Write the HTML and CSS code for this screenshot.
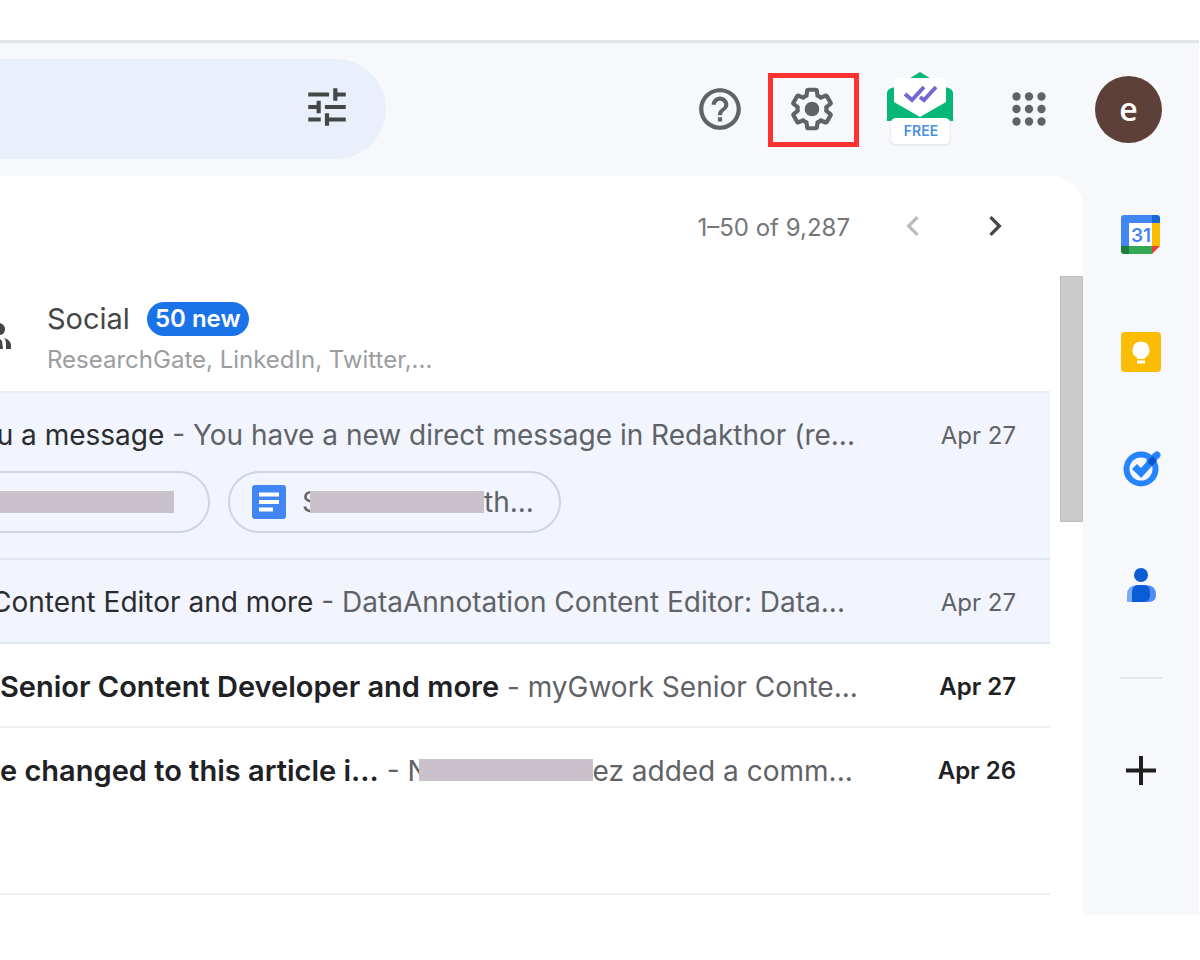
FILE: index.html
```html
<!DOCTYPE html>
<html lang="en">
<head>
<meta charset="utf-8">
<title>Inbox</title>
<link rel="stylesheet" href="styles.css">
</head>
<body>
<div class="app">
  <header class="topbar">
    <div class="search">
      <button class="icon-btn" aria-label="Show search options">
        <svg class="icon" viewBox="0 0 24 24" fill="#444746"><path d="M3 17v2h6v-2H3zM3 5v2h10V5H3zm10 16v-2h8v-2h-8v-2h-2v6h2zM7 9v2H3v2h4v2h2V9H7zm14 4v-2H11v2h10zm-6-4h2V7h4V5h-4V3h-2v6z"/></svg>
      </button>
    </div>
    <nav class="tools">
      <button class="icon-btn" aria-label="Support">
        <svg class="icon" viewBox="0 0 24 24" fill="#5f6368"><path d="M11 18h2v-2h-2v2zm1-16C6.480 2 2 6.480 2 12s4.480 10 10 10 10-4.480 10-10S17.520 2 12 2zm0 18c-4.410 0-8-3.590-8-8s3.590-8 8-8 8 3.590 8 8-3.590 8-8 8zm0-14c-2.210 0-4 1.790-4 4h2c0-1.100.9-2 2-2s2 .9 2 2c0 2-3 1.750-3 5h2c0-2.250 3-2.500 3-5 0-2.210-1.790-4-4-4z"/></svg>
      </button>
      <button class="icon-btn highlighted" aria-label="Settings">
        <svg class="icon" viewBox="0 0 24 24" fill="#5f6368"><path d="M13.850 22.250h-3.700c-.74 0-1.360-.54-1.450-1.270l-.27-1.890c-.27-.14-.53-.29-.79-.46l-1.800.72c-.7.26-1.470-.03-1.810-.65L2.200 15.530c-.35-.66-.2-1.440.36-1.880l1.530-1.190c-.01-.15-.02-.3-.02-.46 0-.15.01-.31.02-.46l-1.520-1.190c-.59-.45-.74-1.260-.37-1.880l1.850-3.190c.34-.62 1.110-.9 1.790-.63l1.810.73c.26-.17.52-.32.78-.46l.27-1.910c.09-.7.71-1.250 1.440-1.250h3.700c.74 0 1.360.54 1.450 1.270l.27 1.890c.27.14.53.29.79.46l1.800-.72c.71-.26 1.480.03 1.820.65l1.840 3.180c.36.66.2 1.440-.36 1.880l-1.520 1.190c.01.15.02.3.02.46s-.01.31-.02.46l1.520 1.190c.56.45.72 1.230.37 1.860l-1.860 3.220c-.34.62-1.110.9-1.800.63l-1.800-.72c-.26.17-.52.32-.78.46l-.27 1.910c-.1.680-.720 1.220-1.460 1.220zm-3.230-2h2.760l.37-2.550.53-.22c.44-.18.88-.44 1.340-.78l.45-.34 2.380.96 1.380-2.400-2.030-1.580.07-.56c.03-.26.06-.51.06-.78s-.03-.53-.06-.78l-.07-.56 2.030-1.580-1.390-2.400-2.390.96-.45-.35c-.42-.32-.87-.58-1.330-.77l-.52-.22-.37-2.550h-2.760l-.37 2.550-.53.21c-.44.19-.88.44-1.340.79l-.45.33-2.380-.95-1.390 2.390 2.030 1.580-.07.56a7 7 0 0 0-.06.790c0 .26.020.53.060.78l.07.56-2.030 1.580 1.380 2.400 2.390-.96.45.35c.43.33.86.58 1.330.77l.53.22.38 2.550z"/><circle cx="12" cy="12" r="3.500"/></svg>
      </button>
      <button class="tracker" aria-label="Mail tracker, free">
        <svg class="envelope" viewBox="0 0 66 74">
          <path d="M20 8 33 0l13 8v10H20z" fill="#06b877"/>
          <path d="M0 21c0-3 3-5 8-6h50c5 1 8 3 8 6v28H0z" fill="#06b877"/>
          <path d="M7 9q0-3 3-3h46q3 0 3 3v21L33 45 7 30z" fill="#fff"/>
          <path d="m18 22 7 6 12-13M33 25l4 3 12-13" fill="none" stroke="#7468d4" stroke-width="4"/>
          <rect x="3" y="47" width="61" height="27" rx="5" fill="#e9ebee"/>
          <rect x="4" y="46" width="59" height="26" rx="5" fill="#fff"/>
          <text class="free" x="34" y="64" text-anchor="middle">FREE</text>
        </svg>
      </button>
      <button class="icon-btn apps" aria-label="Google apps">
        <svg class="icon" viewBox="0 0 24 24" fill="#5f6368"><circle cx="6" cy="6" r="2"/><circle cx="12" cy="6" r="2"/><circle cx="18" cy="6" r="2"/><circle cx="6" cy="12" r="2"/><circle cx="12" cy="12" r="2"/><circle cx="18" cy="12" r="2"/><circle cx="6" cy="18" r="2"/><circle cx="12" cy="18" r="2"/><circle cx="18" cy="18" r="2"/></svg>
      </button>
      <button class="avatar" aria-label="Account">e</button>
    </nav>
  </header>

  <div class="content">
    <main class="panel">
      <div class="pager">
        <span class="range">1–50 of 9,287</span>
        <button class="icon-btn" aria-label="Newer" disabled>
          <svg class="chevron" viewBox="0 0 24 24" fill="#b9bbbd"><path d="M15.410 7.410 14 6l-6 6 6 6 1.410-1.410L10.830 12z"/></svg>
        </button>
        <button class="icon-btn" aria-label="Older">
          <svg class="chevron" viewBox="0 0 24 24" fill="#444746"><path d="M10 6 8.590 7.410 13.170 12l-4.580 4.590L10 18l6-6z"/></svg>
        </button>
      </div>
      <div class="scroller">
        <div class="list">
          <button class="tab">
            <svg class="people" viewBox="0 0 11 26" fill="#444746"><path d="M0 0c3 1 5 3 5 6s-2 6-5 6zM0 16l2 2 1 8H0zM4 15c4 1 7 4 7 7v4H6v-4c0-3 0-5-2-7z"/></svg>
            <span class="tab-text">
              <span class="tab-title">Social <span class="badge">50 new</span></span>
              <span class="tab-sub">ResearchGate, LinkedIn, Twitter,...</span>
            </span>
          </button>
          <article class="mail read tall">
            <div class="line"><p class="text"><span class="subject">ou a message</span> - You have a new direct message in Redakthor (re...</p><time>Apr 27</time></div>
            <div class="chips">
              <button class="chip chip-cut" aria-label="Attachment"><span class="redact redact-file"></span></button>
              <button class="chip">
                <svg class="doc" viewBox="0 0 34 34"><rect width="34" height="34" rx="3" fill="#4285f4"/><path d="M7 9.500h20M7 17h20M7 24.500h14" stroke="#fff" stroke-width="4"/></svg>
                <span class="chip-name">S<span class="redact redact-title"></span>th...</span>
              </button>
            </div>
          </article>
          <article class="mail read">
            <div class="line"><p class="text inset"><span class="subject">Content Editor and more</span> - DataAnnotation Content Editor: Data...</p><time>Apr 27</time></div>
          </article>
          <article class="mail unread">
            <div class="line"><p class="text"><span class="subject">Senior Content Developer and more</span> - myGwork Senior Conte...</p><time>Apr 27</time></div>
          </article>
          <article class="mail unread tall">
            <div class="line"><p class="text"><span class="subject">e changed to this article i...</span> - N<span class="redact redact-name"></span>ez added a comm...</p><time>Apr 26</time></div>
          </article>
        </div>
        <div class="track"><div class="thumb"></div></div>
      </div>
    </main>

    <aside class="side">
      <button class="icon-btn" aria-label="Calendar">
        <svg class="app-icon" viewBox="0 0 42 42"><path d="M1 4q0-3 3-3h28v8H9v23H1z" fill="#4285f4"/><path d="M32 1h5q3 0 3 3v5h-8z" fill="#1967d2"/><path d="M32 9h8v23h-8z" fill="#fbbc04"/><path d="M9 32h23v8H9z" fill="#34a853"/><path d="M1 32h8v8H4q-3 0-3-3z" fill="#188038"/><path d="M32 32h8l-8 8z" fill="#ea4335"/><path d="M9 9h23v23H9z" fill="#fff"/><text class="day" x="21" y="28" text-anchor="middle">31</text></svg>
      </button>
      <button class="icon-btn" aria-label="Keep">
        <svg class="app-icon" viewBox="0 0 42 42"><rect x="1" y="1" width="40" height="40" rx="4" fill="#fbbc04"/><path d="M21 10.500a8.500 8.500 0 0 0-4 16V28h8v-1.500a8.500 8.500 0 0 0-4-16zM17 29.500h8v3h-8z" fill="#fff"/></svg>
      </button>
      <button class="icon-btn" aria-label="Tasks">
        <svg class="app-icon" viewBox="0 0 42 42" fill="none"><circle cx="21" cy="21" r="14.500" stroke="#2684fc" stroke-width="6"/><path d="m14.500 18.500 6.500 6.500L32 13" stroke="#2684fc" stroke-width="7"/><path d="m30 13 7-6" stroke="#2684fc" stroke-width="7" stroke-linecap="round"/><path d="m29 11 4-3 4 5-5 5-4-3z" fill="#0657cf"/></svg>
      </button>
      <button class="icon-btn" aria-label="Contacts">
        <svg class="app-icon" viewBox="0 0 42 42"><circle cx="21" cy="10" r="7" fill="#0b5cd5"/><path d="M7 37v-7q0-10 10-10h9v17z" fill="#7baaf7"/><path d="M24 20h2q10 0 10 10v0q0 7-7 7h-5z" fill="#4c8df6"/><path d="M12 37V27q0-7 7-7h4q7 0 7 7v3q0 7-7 7z" fill="#0b5cd5"/></svg>
      </button>
      <hr class="divider">
      <button class="icon-btn" aria-label="Get add-ons">
        <svg class="app-icon" viewBox="0 0 42 42"><path d="M21 7v29M6 21.500h30" stroke="#1f1f1f" stroke-width="4"/></svg>
      </button>
    </aside>
  </div>
</div>
</body>
</html>
```
FILE: styles.css
```css
* { box-sizing: border-box; }

body {
  margin: 0;
  background: #fff;
  color: #5f6368;
  font-family: Inter, "Open Sans", sans-serif;
}

button {
  margin: 0;
  padding: 0;
  border: 0;
  background: none;
  color: inherit;
  font: inherit;
}

svg { display: block; }

.app {
  margin: 40px 1px 0 0;
  border-top: 3px solid #e2e5e5;
  background: #f6f8fc;
}

.topbar {
  display: flex;
  gap: 309px;
  padding: 16px 37px 17px 0;
}

.search {
  display: flex;
  flex: 1;
  align-items: center;
  justify-content: flex-end;
  height: 100px;
  padding: 0 34px 4px 0;
  border-radius: 0 50px 50px 0;
  background: #e9f0fb;
}

.tools {
  display: flex;
  align-items: center;
}

.icon { width: 50px; height: 50px; }

.highlighted {
  display: flex;
  align-items: center;
  justify-content: center;
  width: 91px;
  height: 74px;
  margin: 2px 28px 0 23px;
  padding: 0 4px 2px 0;
  border: 5px solid #ff3131;
}

.envelope { width: 66px; height: 74px; }

.free {
  fill: #4a90e2;
  font-size: 14px;
  font-weight: 600;
}

.apps { margin: 0 41px 0 51px; }

.avatar {
  width: 67px;
  height: 67px;
  border-radius: 50%;
  background: #5d4037;
  color: #fff;
  font-family: "Open Sans", sans-serif;
  font-size: 32px;
  font-weight: 600;
  line-height: 60px;
}

.content { display: flex; }

.panel {
  flex: 1;
  min-width: 0;
  padding-bottom: 20px;
  border-radius: 0 32px 0 0;
  background: #fff;
}

.pager {
  display: flex;
  align-items: center;
  justify-content: flex-end;
  height: 100px;
  padding-right: 68px;
}

.range {
  margin-right: 43px;
  padding-top: 2px;
  color: #747679;
  font-size: 24px;
}

.pager .icon-btn + .icon-btn { margin-left: 42px; }

.chevron { width: 40px; height: 40px; }

.scroller { display: flex; }

.list {
  flex: 1;
  min-width: 0;
}

.track {
  width: 23px;
  margin-left: 10px;
}

.thumb {
  height: 246px;
  border: 1px solid #bdbdbd;
  background: #cbcbcb;
}

.tab {
  display: flex;
  align-items: center;
  width: 100%;
  height: 117px;
  padding-top: 10px;
  border-bottom: 2px solid #eceff1;
  text-align: left;
}

.people {
  width: 11px;
  height: 26px;
  margin-bottom: 6px;
}

.tab-text {
  display: grid;
  gap: 8px;
  margin-left: 36px;
}

.tab-title {
  display: flex;
  align-items: center;
  gap: 17px;
  color: #444746;
  font-size: 29px;
  line-height: 34px;
}

.badge {
  padding: 0 8px;
  border-radius: 17px;
  background: #1a73e8;
  color: #fff;
  font-size: 24px;
  font-weight: 600;
}

.tab-sub {
  color: #9b9da0;
  font-size: 24px;
  line-height: 32px;
}

.mail {
  height: 84px;
  border-bottom: 2px solid #eef1f2;
}

.mail.tall { height: 167px; }

.read {
  border-color: #e1e7ef;
  background: #f2f5fd;
}

.line {
  display: flex;
  align-items: center;
  height: 82px;
  padding: 2px 34px 0 0;
}

.text {
  display: flex;
  align-items: baseline;
  width: 860px;
  margin: 0;
  overflow: hidden;
  font-size: 28px;
  white-space: pre;
}

.read .text {
  justify-content: flex-end;
  padding-right: 5px;
}

.read .inset { padding-right: 15px; }

.subject { color: #2b2c2f; }

time {
  margin-left: auto;
  font-size: 24px;
}

.unread .subject,
.unread time {
  color: #202124;
  font-weight: 600;
}

.unread .subject { font-size: 29px; }

.chips {
  display: flex;
  gap: 18px;
  margin-top: -4px;
}

.chip {
  display: flex;
  align-items: center;
  width: 333px;
  height: 62px;
  padding-left: 22px;
  border: 2px solid #ccd5e0;
  border-radius: 31px;
}

.chip-cut {
  width: 210px;
  padding: 0;
  border-left: 0;
  border-radius: 0 31px 31px 0;
}

.doc {
  width: 34px;
  height: 34px;
  margin-right: 16px;
}

.chip-name {
  display: flex;
  align-items: center;
  font-size: 28px;
}

.redact {
  flex: none;
  height: 22px;
  background: #c9c2cd;
}

.redact-file { width: 174px; }
.redact-title { width: 174px; margin-left: -10px; }
.redact-name { width: 174px; margin-left: -10px; align-self: center; }

.side {
  display: flex;
  flex-direction: column;
  align-items: center;
  gap: 75px;
  width: 116px;
  padding-top: 38px;
}

.app-icon { width: 42px; height: 42px; }

.day {
  fill: #4285f4;
  font-size: 19px;
  font-weight: 600;
}

.divider {
  width: 42px;
  margin: -5px 0;
  border: 0;
  border-top: 2px solid #e3e5e8;
}
```
